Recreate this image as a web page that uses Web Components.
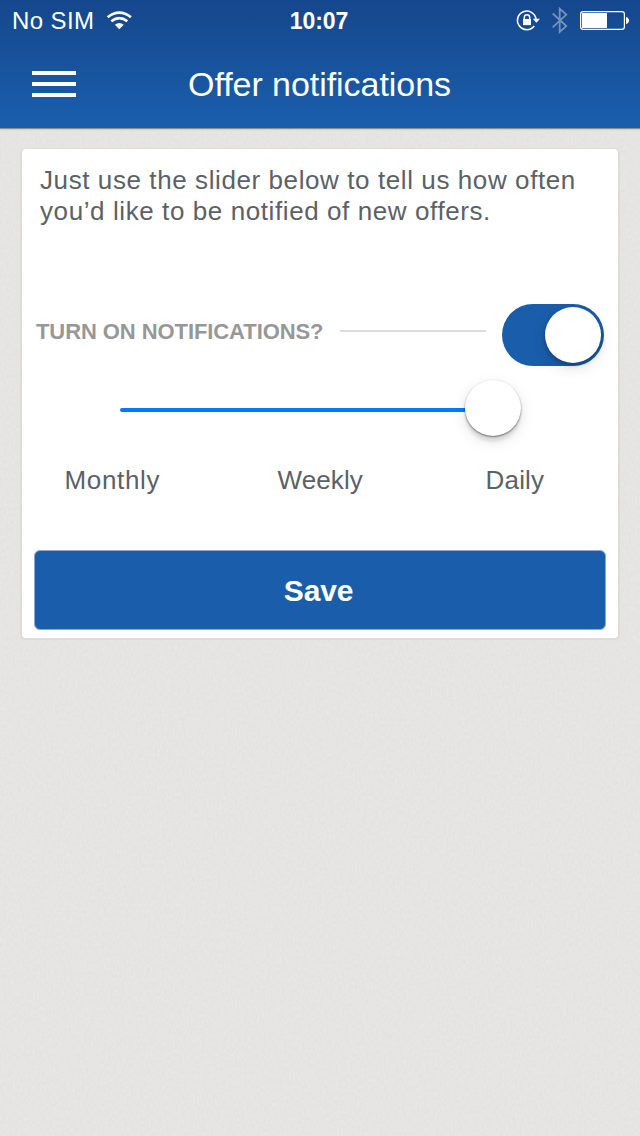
<!DOCTYPE html>
<html lang="en">
<head>
<meta charset="utf-8">
<title>Offer notifications</title>
<style>
html,body{margin:0;height:100%}
body{font-family:"Liberation Sans",Arial,sans-serif;background:#e4e3e1;overflow:hidden}
</style>
</head>
<body>
<offer-app>
  <status-bar slot="header" carrier="No SIM" time="10:07"></status-bar>
  <nav-bar slot="header">Offer notifications</nav-bar>
  <settings-card>
    <intro-text>Just use the slider below to tell us how often<br>you’d like to be notified of new offers.</intro-text>
    <toggle-row>TURN ON NOTIFICATIONS?</toggle-row>
    <frequency-slider><span style="width:213px">Monthly</span><span style="width:208px;letter-spacing:.1px">Weekly</span><span style="letter-spacing:.2px">Daily</span></frequency-slider>
    <save-button>Save</save-button>
  </settings-card>
</offer-app>
<script>
function define(name, html) {
  const template = document.createElement('template');
  template.innerHTML = html;
  customElements.define(name, class extends HTMLElement {
    constructor() {
      super();
      this.attachShadow({mode: 'open'}).append(template.content.cloneNode(true));
    }
    connectedCallback() {
      this.shadowRoot.querySelectorAll('[data-attr]').forEach(el => {
        el.textContent = this.getAttribute(el.dataset.attr);
      });
    }
  });
}

define('offer-app', `
<style>
:host{display:flex;flex-direction:column;width:640px;height:1136px;position:relative;isolation:isolate;overflow:hidden}
.paper{position:absolute;inset:0;z-index:-1;width:640px;height:1136px}
header{height:128px;box-sizing:border-box;background:linear-gradient(#15478c,#1a5dab 94%);box-shadow:0 1px 0 #8f8d88,0 2px 1px #d2d0cc}
main{padding:20px 20px 0}
</style>
<svg class="paper" aria-hidden="true">
<filter id="grain" x="0" y="0" width="100%" height="100%" color-interpolation-filters="sRGB">
<feTurbulence type="fractalNoise" baseFrequency=".45 .28" numOctaves="2" seed="4"/>
<feColorMatrix values=".035 0 0 0 .881  .035 0 0 0 .878  .035 0 0 0 .870  0 0 0 0 1"/>
</filter><rect width="640" height="1136" filter="url(#grain)"/></svg>
<header><slot name="header"></slot></header>
<main><slot></slot></main>`);

define('status-bar', `
<style>
:host{display:grid;grid-template-columns:1fr auto 1fr;height:40px;align-items:center;color:#fff;font-size:24px;line-height:28px;padding:0 11px 0 12px}
.left,.right{display:flex;align-items:center}
.left{gap:11.5px}.carrier{letter-spacing:.4px;padding-top:2px}
.time{font-weight:bold;font-size:23px;letter-spacing:-.1px;padding:2px 3px 0 0}
.right{justify-content:flex-end}
svg{display:block}
</style>
<div class="left"><span class="carrier" data-attr="carrier"></span>
<svg width="26" height="20" viewBox="0 0 26 20" fill="none" stroke="#fff"><path d="M1.7 7.2Q13.3-1.8 24.9 7.2" stroke-width="2.7"/><path d="M5.3 11.2Q13.3 4.9 21.3 11.2" stroke-width="2.7"/><path d="M13.3 19.2L8.9 14.7Q13.3 11.2 17.7 14.7Z" fill="#fff" stroke="none"/></svg></div>
<span class="time" data-attr="time"></span>
<div class="right">
<svg width="124" height="40" viewBox="505 0 124 40" fill="none">
<path d="M534.2 26A9.3 9.3 0 1 1 536 19.2" stroke="#fff" stroke-width="1.6"/>
<path d="M532.8 18.8H540L536.4 22.7Z" fill="#fff"/>
<path d="M523 19H531V25.1H523Z" fill="#fff"/><path d="M524.3 19.5V17.4A2.7 2.7 0 0 1 529.7 17.4V19.5" stroke="#fff" stroke-width="1.5"/>
<path d="M552.7 13.5L566.3 26L559.7 32V8.8L566.3 14.6L552.7 27.3" stroke="#7592bd" stroke-width="1.8"/>
<rect x="580.6" y="11.6" width="43.8" height="17.8" rx="2.6" stroke="#fff" stroke-width="1.2"/>
<path d="M582 13H607V28H582Z" fill="#fff"/><path d="M626 17Q629 18 629 20.5Q629 23 626 24Z" fill="#fff"/>
</svg></div>`);

define('nav-bar', `
<style>
:host{display:grid;grid-template-columns:44px 1fr 44px;height:88px;padding:0 32px;align-items:center;color:#fff}
.menu{display:flex;flex-direction:column;gap:7px}
.menu i{height:4px;background:#fff}
h1{margin:0;font-weight:400;font-size:34px;line-height:40px;letter-spacing:-.05px;text-align:center;white-space:nowrap;padding-right:1px}
</style>
<div class="menu"><i></i><i></i><i></i></div><h1><slot></slot></h1>`);

define('settings-card', `
<style>
:host{display:block;box-sizing:border-box;width:600px;height:492px;background:#fff;background-clip:padding-box;border:2px solid #dcdcdb;border-top-width:1px;border-radius:5px;padding:0 12px}
</style><slot></slot>`);

define('intro-text', `
<style>
:host{display:block;height:155px;padding:16px 0 0 6px;box-sizing:border-box;color:#5c6165;font-size:26px;line-height:31px;letter-spacing:.59px;white-space:nowrap}
</style><slot></slot>`);

define('toggle-row', `
<style>
:host{display:flex;height:62px;padding-left:2px}
label{width:304px;flex:none;color:#979797;font-weight:bold;font-size:22px;line-height:26px;letter-spacing:-.08px;padding-top:15px;box-sizing:border-box}
.rule{width:146px;height:2px;background:#dcdcdc;margin-top:26px;flex:none}
.switch{display:flex;justify-content:flex-end;box-sizing:border-box;width:102px;height:62px;border-radius:31px;background:#1a5dab;padding:3px;margin-left:16px;flex:none}
.switch i{width:56px;height:56px;border-radius:50%;background:#fff;box-shadow:0 5px 15px rgba(0,0,0,.12),0 2px 4px rgba(0,0,0,.25)}
</style><label><slot></slot></label><span class="rule"></span><span class="switch"><i></i></span>`);

define('frequency-slider', `
<style>
:host{display:block;height:184px}
.track{display:flex;align-items:center;height:84px;padding-left:86px}
.fill{width:345px;height:4px;background:#007aff;border-radius:2px 0 0 2px;margin-top:4px}
.knob{width:56px;height:56px;border-radius:50%;background:#fff;box-shadow:0 5px 15px rgba(0,0,0,.12),0 6px 3px rgba(0,0,0,.08),0 1px 2px rgba(0,0,0,.5)}
.labels{display:flex;padding-left:30.5px;padding-top:15px;color:#5c6165;font-size:26px;line-height:30px;letter-spacing:.65px}
</style><div class="track"><span class="fill"></span><span class="knob"></span></div><div class="labels"><slot></slot></div>`);

define('save-button', `
<style>
:host{display:block}
button{display:block;width:572px;height:80px;border:1px solid #86a9d5;border-radius:6px;background:#1a5dab;color:#fff;font:bold 30px/34px "Liberation Sans",Arial,sans-serif;letter-spacing:-.2px;padding:1px 3px 0 0;margin:0}
</style><button><slot></slot></button>`);
</script>
</body>
</html>
